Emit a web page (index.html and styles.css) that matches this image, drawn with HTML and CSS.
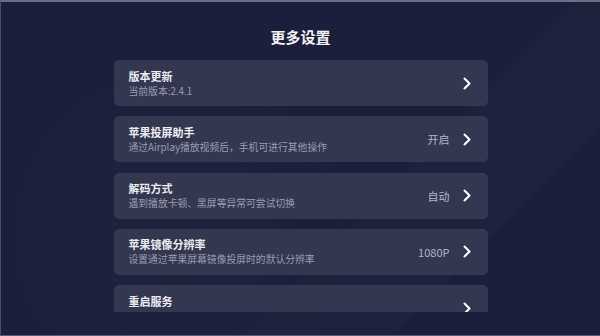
FILE: index.html
```html
<!DOCTYPE html>
<html lang="zh-CN">
<head>
    <meta charset="UTF-8">
    <meta name="viewport" content="width=device-width, initial-scale=1.0">
    <title>更多设置</title>
    <link rel="stylesheet" href="styles.css">
</head>
<body>
    <div class="screen">
        <h1 class="page-title">更多设置</h1>
        <div class="settings-list">
            <div class="setting-item">
                <div class="setting-text">
                    <div class="setting-name">版本更新</div>
                    <div class="setting-desc">当前版本:2.4.1</div>
                </div>
                <div class="setting-side">
                    <svg class="chevron" viewBox="0 0 8 13"><path d="M1.5 1.5 L6.5 6.5 L1.5 11.5"/></svg>
                </div>
            </div>
            <div class="setting-item">
                <div class="setting-text">
                    <div class="setting-name">苹果投屏助手</div>
                    <div class="setting-desc">通过Airplay播放视频后，手机可进行其他操作</div>
                </div>
                <div class="setting-side">
                    <span class="setting-value">开启</span>
                    <svg class="chevron" viewBox="0 0 8 13"><path d="M1.5 1.5 L6.5 6.5 L1.5 11.5"/></svg>
                </div>
            </div>
            <div class="setting-item">
                <div class="setting-text">
                    <div class="setting-name">解码方式</div>
                    <div class="setting-desc">遇到播放卡顿、黑屏等异常可尝试切换</div>
                </div>
                <div class="setting-side">
                    <span class="setting-value">自动</span>
                    <svg class="chevron" viewBox="0 0 8 13"><path d="M1.5 1.5 L6.5 6.5 L1.5 11.5"/></svg>
                </div>
            </div>
            <div class="setting-item">
                <div class="setting-text">
                    <div class="setting-name">苹果镜像分辨率</div>
                    <div class="setting-desc">设置通过苹果屏幕镜像投屏时的默认分辨率</div>
                </div>
                <div class="setting-side">
                    <span class="setting-value">1080P</span>
                    <svg class="chevron" viewBox="0 0 8 13"><path d="M1.5 1.5 L6.5 6.5 L1.5 11.5"/></svg>
                </div>
            </div>
            <div class="setting-item">
                <div class="setting-text single">
                    <div class="setting-name">重启服务</div>
                </div>
                <div class="setting-side">
                    <svg class="chevron" viewBox="0 0 8 13"><path d="M1.5 1.5 L6.5 6.5 L1.5 11.5"/></svg>
                </div>
            </div>
        </div>
    </div>
</body>
</html>
```

FILE: styles.css
```css
* {
    box-sizing: border-box;
}

body {
    margin: 0;
    font-family: "Noto Sans CJK SC", "Noto Sans", sans-serif;
    background-color: #1c1f3a;
}

.screen {
    width: 600px;
    height: 336px;
    overflow: hidden;
    border-top: 2px solid #6c6f82;
    border-left: 1px solid #4a4d63;
    border-bottom: 1px solid #5a5d72;
    background-color: #1c1f3b;
    background-image:
        linear-gradient(135deg, rgba(255,255,255,0) 62%, rgba(255,255,255,0.012) 62%, rgba(255,255,255,0.012) 78%, rgba(255,255,255,0) 78%),
        radial-gradient(circle at 30% 70%, rgba(255,255,255,0.015) 0%, rgba(255,255,255,0) 40%);
}

.page-title {
    margin: 0;
    padding-top: 25px;
    height: 58px;
    text-align: center;
    font-size: 15px;
    line-height: 20px;
    font-weight: bold;
    color: #f2f2f5;
}

.settings-list {
    width: 374px;
    height: 252px;
    margin: 0 auto;
    overflow: hidden;
    display: flex;
    flex-direction: column;
    gap: 10.3px;
}

.setting-item {
    flex-shrink: 0;
    height: 46px;
    padding: 0 17px 0 15px;
    border-radius: 5px;
    background-color: #33374f;
    display: flex;
    align-items: center;
    justify-content: space-between;
}

.setting-text.single {
    padding-bottom: 15px;
}

.setting-name {
    font-size: 11px;
    line-height: 14px;
    font-weight: bold;
    color: #eeeef2;
}

.setting-desc {
    margin-top: 2px;
    font-size: 9.8px;
    line-height: 13px;
    color: #9c9eb0;
}

.setting-side {
    display: flex;
    align-items: center;
}

.setting-value {
    margin-right: 13px;
    font-size: 11px;
    color: #b5b6c3;
}

.chevron {
    width: 8px;
    height: 13px;
    fill: none;
    stroke: #ffffff;
    stroke-width: 2;
    stroke-linecap: round;
    stroke-linejoin: round;
}
```
